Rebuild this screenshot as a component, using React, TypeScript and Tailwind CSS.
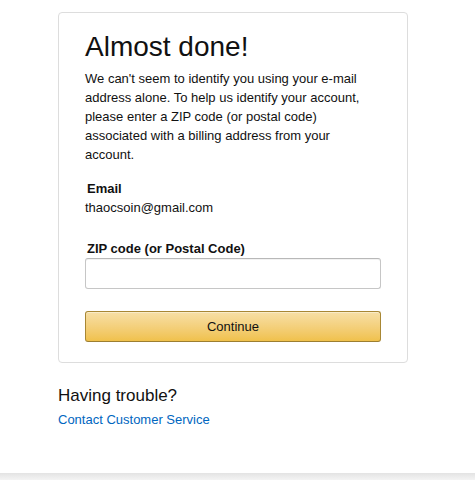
export default function App() {
  return (
    <div className="min-h-[480px] bg-white font-['Liberation_Sans',Arial,sans-serif] text-[#111] text-[13px] leading-[19px]">
      <div className="pl-[58px] pt-[12px]">
        <div className="w-[350px] rounded-[4px] border border-[#ddd] px-[26px] pt-[17px] pb-[20px]">
          <h1 className="text-[28px] leading-[34px] font-normal mb-[5px]">Almost done!</h1>
          <p>
            We can't seem to identify you using your e-mail address alone. To help us identify your account,
            please enter a ZIP code (or postal code) associated with a billing address from your account.
          </p>

          <div className="mt-[15px]">
            <div className="font-bold pl-[2px]">Email</div>
            <div>thaocsoin@gmail.com</div>
          </div>

          <label className="block font-bold pl-[2px] mt-[22px]">ZIP code (or Postal Code)</label>
          <input
            type="text"
            className="block w-full h-[31px] rounded-[3px] border border-[#c6c6c6] border-t-[#b8b8b8] shadow-[0_1px_0_rgba(0,0,0,.05)_inset] px-[7px] outline-none"
          />

          <button className="mt-[22px] w-full h-[31px] rounded-[3px] border border-[#a88734] border-b-[#9c7e31] bg-gradient-to-b from-[#f7dfa5] to-[#f0c14b] text-[13px] text-[#111] shadow-[0_1px_0_rgba(255,255,255,.4)_inset]">
            Continue
          </button>
        </div>

        <div className="mt-[21px]">
          <h4 className="text-[17px] leading-[24px] font-normal">Having trouble?</h4>
          <a href="#" className="block mt-[2px] text-[#0066c0]">Contact Customer Service</a>
        </div>
      </div>

      <div className="mt-[44px] h-[8px] bg-gradient-to-b from-[#e3e3e3] to-[#f6f6f6]" />
    </div>
  )
}
